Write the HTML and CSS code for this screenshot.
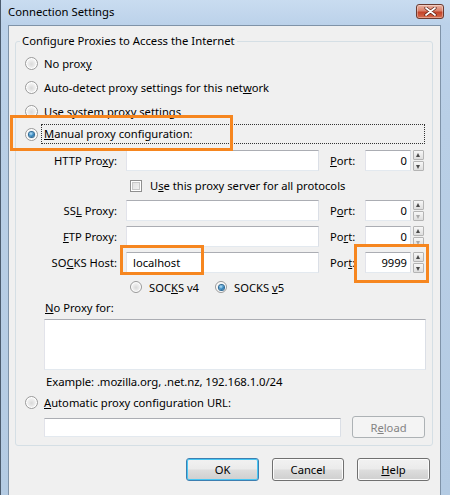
FILE: index.html
```html
<!DOCTYPE html>
<html>
<head>
<meta charset="utf-8">
<link rel="stylesheet" href="styles.css">
</head>
<body>
<div class="window">
  <div class="titlebar">
    <span class="title">Connection Settings</span>
    <span class="close"><svg width="13" height="9" viewBox="0 0 13 9"><path d="M2 1 L11 8 M11 1 L2 8" stroke="#5a1d12" stroke-width="3.2" stroke-linecap="round"/><path d="M2 1 L11 8 M11 1 L2 8" stroke="#fff" stroke-width="1.8" stroke-linecap="round"/></svg></span>
  </div>
  <div class="client">
    <fieldset class="group">
      <legend>Configure Proxies to Access the Internet</legend>
      <div class="radio-row"><span class="radio"></span><span>No prox<u>y</u></span></div>
      <div class="radio-row"><span class="radio"></span><span>Auto-detect proxy settings for this net<u>w</u>ork</span></div>
      <div class="radio-row"><span class="radio"></span><span>Use system proxy settings</span></div>
      <div class="radio-row manual"><span class="radio checked"></span><span class="focus"><u>M</u>anual proxy configuration:</span></div>

      <div class="proxy-row first">
        <span class="plabel">HTTP Pro<u>x</u>y:</span>
        <span class="field host"></span>
        <span class="portlabel"><u>P</u>ort:</span>
        <span class="port"><span class="field num">0</span><span class="spin"><span class="up"></span><span class="down"></span></span></span>
      </div>
      <div class="check-row"><span class="check"></span><span>U<u>s</u>e this proxy server for all protocols</span></div>
      <div class="proxy-row ssl">
        <span class="plabel">SS<u>L</u> Proxy:</span>
        <span class="field host"></span>
        <span class="portlabel">P<u>o</u>rt:</span>
        <span class="port"><span class="field num">0</span><span class="spin"><span class="up"></span><span class="down off"></span></span></span>
      </div>
      <div class="proxy-row">
        <span class="plabel"><u>F</u>TP Proxy:</span>
        <span class="field host"></span>
        <span class="portlabel">Po<u>r</u>t:</span>
        <span class="port"><span class="field num">0</span><span class="spin"><span class="up"></span><span class="down off"></span></span></span>
      </div>
      <div class="proxy-row">
        <span class="plabel">SO<u>C</u>KS Host:</span>
        <span class="field host">localhost</span>
        <span class="portlabel">Por<u>t</u>:</span>
        <span class="port"><span class="field num">9999</span><span class="spin"><span class="up"></span><span class="down"></span></span></span>
      </div>
      <div class="socks-row">
        <span class="radio small"></span><span class="v4">SOC<u>K</u>S v4</span>
        <span class="radio small checked"></span><span class="v5">SOCKS <u>v</u>5</span>
      </div>
      <div class="noproxy-label"><u>N</u>o Proxy for:</div>
      <div class="field textarea"></div>
      <div class="example">Example: .mozilla.org, .net.nz, 192.168.1.0/24</div>
      <div class="radio-row auto"><span class="radio"></span><span><u>A</u>utomatic proxy configuration URL:</span></div>
      <div class="url-row">
        <span class="field url"></span>
        <span class="btn reload">R<u>e</u>load</span>
      </div>
    </fieldset>
    <div class="buttons">
      <span class="btn default">OK</span>
      <span class="btn">Cancel</span>
      <span class="btn"><u>H</u>elp</span>
    </div>
  </div>
</div>
<div class="mark mark-manual"></div>
<div class="mark mark-host"></div>
<div class="mark mark-port"></div>
</body>
</html>
```
FILE: styles.css
```css
* { box-sizing: border-box; }
html, body { margin: 0; padding: 0; }
body {
  width: 450px;
  height: 495px;
  overflow: hidden;
  font-family: "Noto Sans", sans-serif;
  font-size: 11.2px;
  color: #000;
  position: relative;
}
u { text-decoration: underline; text-underline-offset: 1px; }

.window {
  width: 450px;
  height: 495px;
  display: flex;
  flex-direction: column;
  padding: 0 9px 0 7px;
  border-left: 1px solid #4c5c6e;
  background: linear-gradient(180deg, #c9dcf0 0px, #bcd2ea 24px, #b9cfe6 120px, #b4cbe3 495px);
}
.titlebar {
  height: 25px;
  flex: none;
  display: flex;
  justify-content: space-between;
  align-items: flex-start;
}
.title {
  font-size: 11.3px;
  line-height: 16px;
  margin-top: 4px;
  color: #000;
}
.close {
  width: 28px;
  height: 15px;
  margin-top: 4px;
  margin-right: -3px;
  border: 1px solid #6b3a30;
  border-radius: 3px;
  background: linear-gradient(180deg, #eab3a3 0%, #d9806a 45%, #c2432a 55%, #d76d4e 100%);
  display: flex;
  align-items: center;
  justify-content: center;
  box-shadow: inset 0 0 0 1px rgba(255,255,255,0.35);
}
.close svg { display: block; }

.client {
  flex: 1;
  background: #f0f0f0;
  border: 1px solid #7f93a8;
  border-bottom: none;
  display: flex;
  flex-direction: column;
}

.group {
  margin: 7px 7px 0 6px;
  padding: 2px 6px 7px 9px;
  border: 1px solid #d5dfe5;
  border-radius: 3px;
  min-width: 0;
  display: flex;
  flex-direction: column;
}
.group legend {
  margin-left: -5px;
  padding: 0 2px;
  line-height: 16px;
  font-size: 11.3px;
}

.radio {
  width: 13px;
  height: 13px;
  flex: none;
  border-radius: 50%;
  border: 1px solid #9a9a9a;
  background: radial-gradient(circle at 50% 55%, #d9d9d9 0, #e9e9e9 35%, #fafafa 75%);
  box-shadow: inset 0 0 0 1px #fff;
  position: relative;
}
.radio.small { width: 12px; height: 12px; }
.radio.checked::after {
  content: "";
  position: absolute;
  left: 3px;
  top: 3px;
  width: 5px;
  height: 5px;
  border-radius: 50%;
  background: radial-gradient(circle at 40% 35%, #bfe6fb 0, #3a8cc4 50%, #134f7e 100%);
  box-shadow: 0 0 0 1px #2f6b97;
}
.radio.small.checked::after { left: 2.5px; top: 2.5px; }

.radio-row {
  height: 24px;
  display: flex;
  align-items: center;
  gap: 6px;
}
.radio-row.manual {
  height: 20px;
  margin-top: 1px;
  gap: 3px;
}
.focus {
  flex: 1;
  height: 20px;
  line-height: 18px;
  border: 1px dotted #333;
  padding-left: 2px;
  margin-right: 1px;
}

.proxy-row {
  height: 21px;
  display: flex;
  align-items: center;
  margin-top: 5px;
}
.proxy-row.first { margin-top: 6px; }
.proxy-row.ssl { margin-top: 2px; }
.plabel {
  width: 92px;
  text-align: right;
  margin-right: 9px;
  flex: none;
}
.field {
  background: #fff;
  border: 1px solid;
  border-color: #abadb3 #dbdfe6 #e3e9ef #e2e3ea;
  display: block;
}
.field.host {
  width: 193px;
  height: 21px;
  line-height: 19px;
  padding-left: 6px;
}
.portlabel {
  margin-left: 11px;
  width: 35px;
  flex: none;
}
.port {
  display: flex;
  align-items: center;
  gap: 2px;
  height: 21px;
}
.field.num {
  width: 46px;
  height: 21px;
  line-height: 19px;
  text-align: right;
  padding-right: 3px;
}
.spin {
  width: 11px;
  height: 21px;
  display: flex;
  flex-direction: column;
  gap: 1px;
}
.spin span {
  flex: 1;
  border: 1px solid #b4b4b4;
  border-radius: 1px;
  background: linear-gradient(180deg, #f7f7f7, #dedede);
  position: relative;
}
.spin .up::after, .spin .down::after {
  content: "";
  position: absolute;
  left: 2px;
  width: 0;
  height: 0;
  border-left: 2.5px solid transparent;
  border-right: 2.5px solid transparent;
}
.spin .up::after { top: 2px; border-bottom: 4px solid #4a4a4a; }
.spin .down::after { top: 3px; border-top: 4px solid #4a4a4a; }
.spin .down.off::after { border-top-color: #a8a8a8; }

.check-row {
  height: 25px;
  margin-top: 2px;
  display: flex;
  align-items: center;
  padding-left: 105px;
  gap: 8px;
}
.check {
  width: 12px;
  height: 12px;
  border: 1px solid #8f8f8f;
  background: linear-gradient(135deg, #dcdcdc, #f6f6f6);
  box-shadow: inset 0 0 0 1px #fff, inset 0 0 0 2px #c8c8c8;
  flex: none;
}

.socks-row {
  height: 24px;
  margin-top: 2px;
  display: flex;
  align-items: center;
  padding-left: 105px;
}
.v4 { width: 73px; padding-left: 7px; flex: none; }
.v5 { padding-left: 7px; }

.noproxy-label {
  height: 16px;
  line-height: 16px;
  margin-top: 1px;
  margin-left: 20px;
}
.field.textarea {
  margin-top: 3px;
  margin-left: 19px;
  width: 382px;
  height: 51px;
}
.example {
  height: 17px;
  line-height: 17px;
  margin-top: 3px;
  margin-left: 21px;
  font-size: 11.4px;
  letter-spacing: -0.1px;
}
.radio-row.auto { margin-top: 0; }

.url-row {
  height: 22px;
  margin-top: 2px;
  display: flex;
  align-items: center;
}
.field.url {
  margin-left: 19px;
  width: 297px;
  height: 19px;
}

.btn {
  display: flex;
  align-items: center;
  justify-content: center;
  height: 23px;
  width: 73px;
  border: 1px solid #707070;
  border-radius: 3px;
  background: linear-gradient(180deg, #f2f2f2 0%, #ebebeb 48%, #dddddd 52%, #cfcfcf 100%);
  box-shadow: inset 0 0 0 1px #fcfcfc;
}
.btn.reload {
  margin-left: 11px;
  height: 22px;
  border-color: #adb2b5;
  background: #f4f4f4;
  color: #838383;
  box-shadow: none;
}
.btn.default {
  border-color: #3c7fb1;
  box-shadow: inset 0 0 0 1px #48c7f4;
}
.buttons {
  display: flex;
  justify-content: flex-end;
  gap: 13px;
  margin-top: 12px;
  padding-right: 10px;
}
.buttons .btn:nth-child(2) { width: 72px; }

.mark {
  position: absolute;
  border: 3px solid #f6861f;
}
.mark-manual { left: 10px; top: 115px; width: 223px; height: 36px; }
.mark-host { left: 120px; top: 245px; width: 84px; height: 30px; }
.mark-port { left: 354px; top: 244px; width: 75px; height: 39px; }
```
